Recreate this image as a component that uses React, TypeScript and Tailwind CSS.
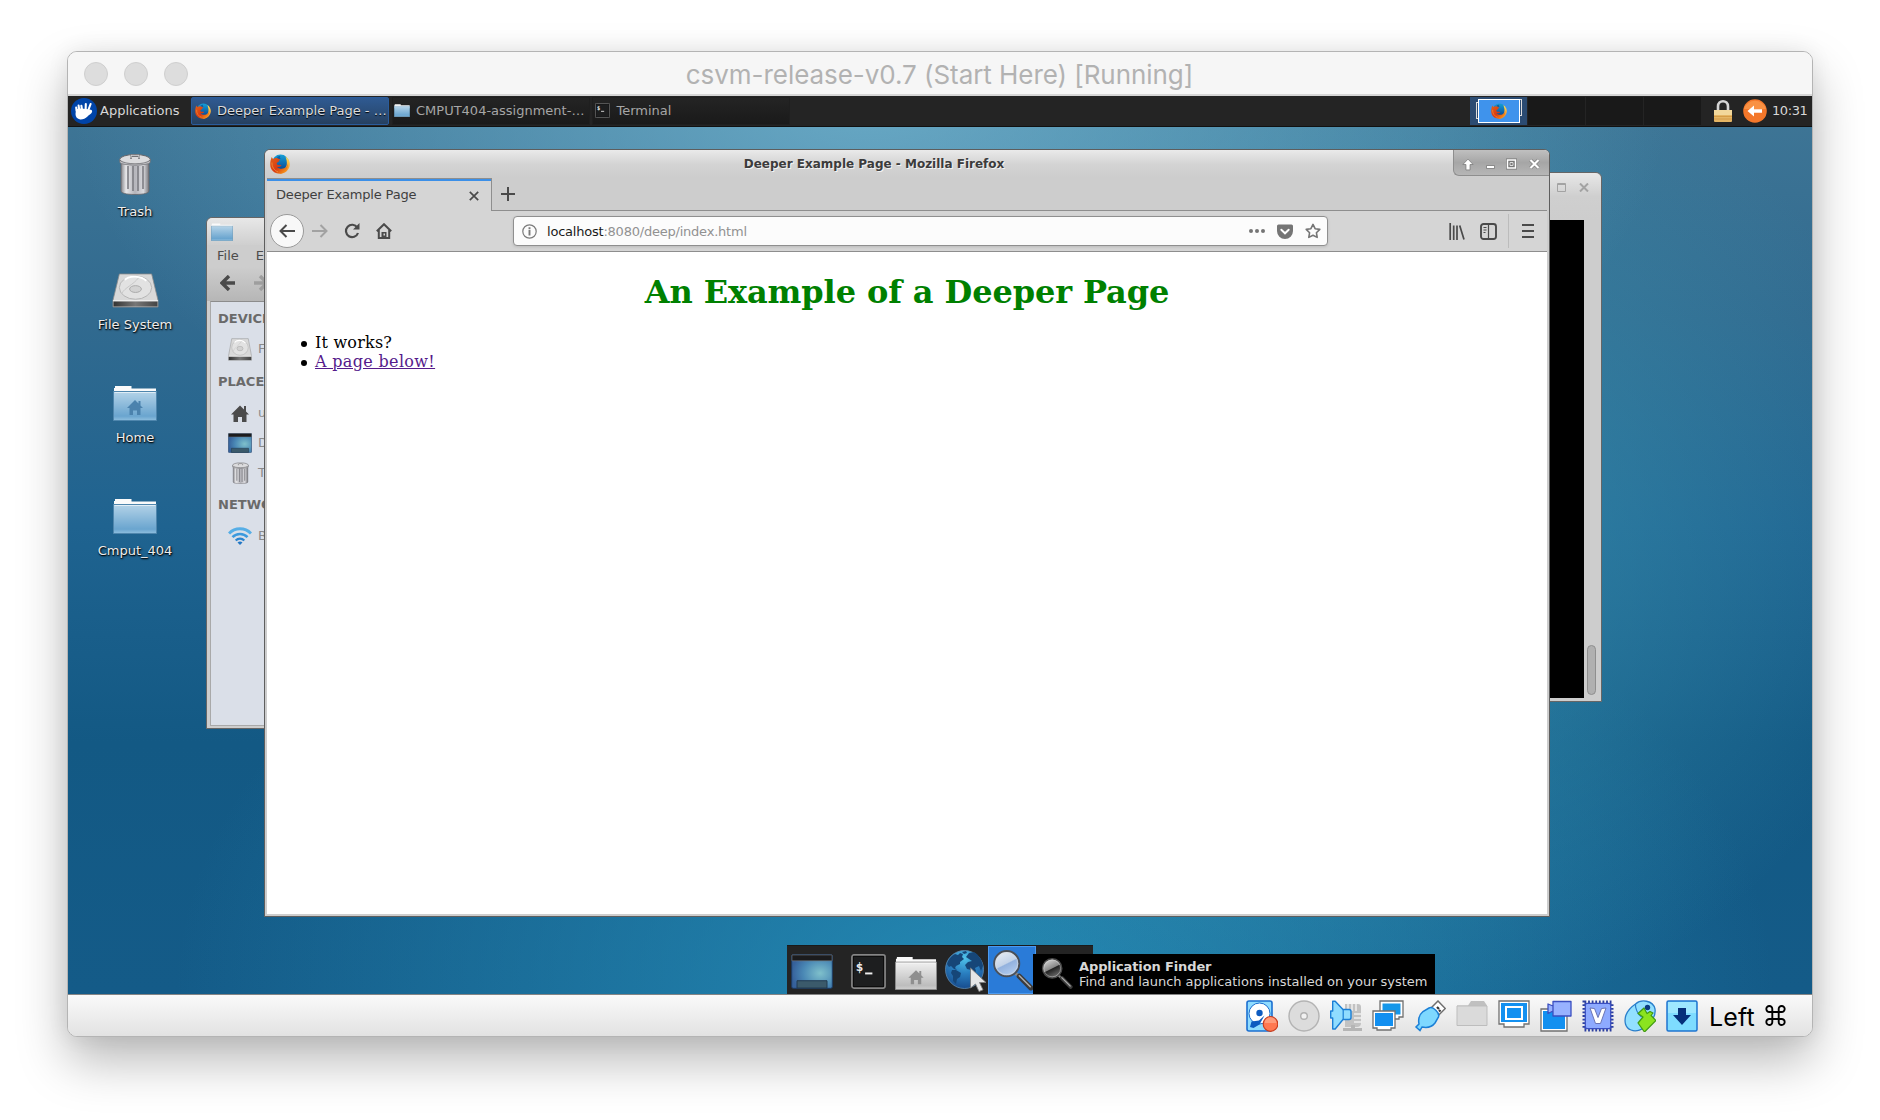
import React from "react";

const sans = "font-['DejaVu_Sans',sans-serif]";

function FirefoxIcon({ size, id }: { size: number; id: string }) {
  return (
    <svg width={size} height={size} viewBox="0 0 20 20" className="block shrink-0">
      <defs>
        <linearGradient id={id + "b"} x1="0" y1="0" x2="0" y2="1">
          <stop offset="0" stopColor="#15a0d8" />
          <stop offset="1" stopColor="#0b3f8c" />
        </linearGradient>
        <linearGradient id={id + "o"} x1="0" y1="0" x2="1" y2="0.9">
          <stop offset="0" stopColor="#e0621a" />
          <stop offset="0.55" stopColor="#d93a12" />
          <stop offset="1" stopColor="#f9a51c" />
        </linearGradient>
        <linearGradient id={id + "y"} x1="0" y1="0" x2="0" y2="1">
          <stop offset="0" stopColor="#ffe25a" />
          <stop offset="1" stopColor="#f2801c" />
        </linearGradient>
      </defs>
      <circle cx="10.500" cy="9" r="8.400" fill={`url(#${id}b)`} />
      <path d="M15.500 2.400c3 1.900 4.500 5 4.300 8.300-.5 5.200-4.700 8.900-9.600 9l-1-3c4 0 7.200-2.600 7.600-6.400.3-2.700-.3-5-1.300-7.900z" fill={`url(#${id}y)`} />
      <path d="M1.800 3c.3 1 .8 1.700 1.500 2.100C4.600 4 6 3.800 7.300 4.300L10 5.100 8.900 7.500 6.700 9c0 1.400.7 2 2 2h2.800c-.8 1.700-2.600 2.300-4.600 1.700 2 2.500 6.600 2.800 9.300.3 1-1 1.500-2.400 1.400-4 1.300 5.700-2.600 10.700-7.800 10.700C4.200 19.700.2 15.600.2 10.400.2 7.500.7 5.200 1.800 3z" fill={`url(#${id}o)`} />
      <path d="M2 8.500c-.3 4 2 8 6 9.300" fill="none" stroke="#f59a3c" strokeWidth="1" opacity=".7" />
      <path d="M7 3.500c.8-1 2.200-1.600 3.500-1.300-.9.400-.8 1.300.2 2.700-1.400.3-2.400 0-3.700-1.400z" fill="#0c4d94" opacity=".7" />
    </svg>
  );
}

function Folder({ w, h, id, home, gray }: { w: number; h: number; id: string; home?: boolean; gray?: boolean }) {
  return (
    <svg width={w} height={h} viewBox="0 0 44 36" preserveAspectRatio="none" className="block shrink-0">
      <defs>
        <linearGradient id={id} x1="0" y1="0" x2="0" y2="1">
          <stop offset="0" stopColor={gray ? "#f0f0f0" : "#b4d3e8"} />
          <stop offset="0.85" stopColor={gray ? "#bdbdbd" : "#6aa5cf"} />
          <stop offset="1" stopColor={gray ? "#cfcfcf" : "#8fbfdf"} />
        </linearGradient>
      </defs>
      <path d="M2 1h16.500v2.500H43V12H1V3h1z" fill="#fafafa" />
      <path d="M.5 6.500h43V35.500H.5z" fill={`url(#${id})`} stroke={gray ? "#8c8c8c" : "#4f86ad"} strokeWidth="1" />
      <path d="M1.500 7.500h41" stroke="#fff" opacity=".6" />
      {home && (
        <path d="M22 15l-8 8h2.500v7H20v-4.500h4V30h3.500v-7H30l-2.500-2.500V16h-2v2.500z" fill={gray ? "#8f8f8f" : "#4b82ad"} />
      )}
    </svg>
  );
}

function TrashIcon({ w, h, id }: { w: number; h: number; id: string }) {
  return (
    <svg width={w} height={h} viewBox="0 0 32 42" className="block shrink-0">
      <defs>
        <linearGradient id={id}>
          <stop offset="0" stopColor="#85858a" />
          <stop offset=".18" stopColor="#e8e8ea" />
          <stop offset=".5" stopColor="#b4b4ba" />
          <stop offset=".8" stopColor="#dadade" />
          <stop offset="1" stopColor="#77777c" />
        </linearGradient>
      </defs>
      <path d="M2 8h28v30c0 2-5 3.500-14 3.500S2 40 2 38z" fill={`url(#${id})`} stroke="#66666a" strokeWidth=".8" />
      <path d="M9 13v23M14 13v25M19 13v25M24 13v23" stroke="#77777d" strokeWidth="2" opacity=".75" />
      <ellipse cx="16" cy="6.500" rx="15.300" ry="5" fill="#dcdcde" stroke="#66666a" />
      <path d="M.8 7v2.500C3 13 29 13 31.200 9.500V7C27 12 5 12 .8 7z" fill="#c4c4c8" stroke="#6c6c70" strokeWidth=".7" />
      <path d="M12 6V3h8v3" fill="none" stroke="#727276" strokeWidth="1.800" />
      <path d="M12 5.300V2.300h8v3" fill="none" stroke="#eee" strokeWidth=".8" />
    </svg>
  );
}

function DriveIcon({ w, h, id }: { w: number; h: number; id: string }) {
  return (
    <svg width={w} height={h} viewBox="0 0 48 36" preserveAspectRatio="none" className="block shrink-0">
      <defs>
        <linearGradient id={id}>
          <stop offset="0" stopColor="#333" />
          <stop offset=".5" stopColor="#777" />
          <stop offset="1" stopColor="#444" />
        </linearGradient>
      </defs>
      <path d="M7.500 1h33L47 28v7H1v-7z" fill="#d9d9d9" stroke="#8a8a8a" strokeWidth=".8" />
      <path d="M1.500 29h45v5.500h-45z" fill={`url(#${id})`} />
      <path d="M1 28.500h46" stroke="#f5f5f5" strokeWidth="1.200" />
      <ellipse cx="24" cy="15" rx="16.500" ry="12" fill="#e2e2e2" stroke="#b5b5b5" />
      <path d="M13 7c5-5 17-4 22 1" stroke="#fff" strokeWidth="2" fill="none" />
      <path d="M10 21c3-6 12-9 17-16" stroke="#c6c6c6" fill="none" />
      <ellipse cx="24" cy="16.500" rx="6" ry="3.500" fill="#d2d2d2" stroke="#aaa" />
    </svg>
  );
}

function MonitorThumb({ w, h, id }: { w: number; h: number; id: string }) {
  return (
    <svg width={w} height={h} viewBox="0 0 42 36" preserveAspectRatio="none" className="block shrink-0">
      <defs>
        <radialGradient id={id} cx=".7" cy=".55" r=".7">
          <stop offset="0" stopColor="#7fc0cb" />
          <stop offset=".6" stopColor="#4a88b5" />
          <stop offset="1" stopColor="#36619b" />
        </radialGradient>
      </defs>
      <rect x=".7" y=".7" width="40.600" height="34.600" rx="1.500" fill={`url(#${id})`} stroke="#1d3d66" />
      <path d="M1 1h40v6H1z" fill="#1b1b1d" stroke="#777" strokeWidth=".6" />
      <path d="M6 35v-7.500h30V35z" fill="#3b5a6b" stroke="#22394f" />
    </svg>
  );
}

function TerminalIcon({ size }: { size: number }) {
  return (
    <svg width={size} height={size} viewBox="0 0 36 36" className="block shrink-0">
      <rect x="1" y="1" width="34" height="34" rx="2" fill="#1d1e1f" stroke="#858585" strokeWidth="1.800" />
      <rect x="2.500" y="2.500" width="31" height="31" fill="none" stroke="#0d0d0d" />
      <text x="5" y="17" fontSize="13" fontWeight="bold" fill="#eee" fontFamily="DejaVu Sans Mono">$</text>
      <path d="M14.500 20h7.500" stroke="#eee" strokeWidth="2" />
    </svg>
  );
}

function Magnifier({ w, h, id, dark }: { w: number; h: number; id: string; dark?: boolean }) {
  return (
    <svg width={w} height={h} viewBox="0 0 40 40" className="block shrink-0">
      <defs>
        <linearGradient id={id} x1="0.200" y1="0" x2=".7" y2="1">
          <stop offset="0" stopColor={dark ? "#ddd" : "#e8eef6"} />
          <stop offset=".5" stopColor={dark ? "#888" : "#c3d3e8"} />
          <stop offset=".54" stopColor={dark ? "#222" : "#93b2de"} />
          <stop offset="1" stopColor={dark ? "#777" : "#b4cef0"} />
        </linearGradient>
      </defs>
      <path d="M22 22l5 4" stroke="#888" strokeWidth="3" />
      <path d="M26 25l11 11" stroke="#3c3c3c" strokeWidth="5" strokeLinecap="round" />
      <path d="M26 24.500l10.500 10.500" stroke="#aaa" strokeWidth="1.500" strokeLinecap="round" />
      <circle cx="14" cy="13" r="12" fill={`url(#${id})`} stroke={dark ? "#4a4a4a" : "#4b5058"} strokeWidth="1.800" />
      <circle cx="14" cy="13" r="10.500" fill="none" stroke="#ddd" strokeWidth=".8" opacity=".7" />
    </svg>
  );
}

function Globe() {
  return (
    <svg width="42" height="44" viewBox="0 0 42 44" className="block shrink-0">
      <defs>
        <radialGradient id="globe" cx=".5" cy=".2" r=".8">
          <stop offset="0" stopColor="#4fc3ea" />
          <stop offset=".5" stopColor="#2a7fc0" />
          <stop offset="1" stopColor="#174c8e" />
        </radialGradient>
      </defs>
      <circle cx="19.500" cy="20.500" r="19" fill="url(#globe)" stroke="#5d8cb4" strokeWidth=".8" />
      <path d="M2 15c1-4 4-8 8-10l3 1 2-2 3 1-1 3 2 2-4 3 0 2-4 2-1 2 2 2-3-1-3-3-2 1zM7 21l4 0 5 3-1 4-3 2-1 5-3-3 0-5-2-3zM21 8l3-4 5-1c5 3 8 8 9 14l-2 5-2-5-4 2 1 3-3 4-2-5-4-1-2-4 3-3 4-1zM17 3l4-1 1 2-3 1z" fill="#164678" />
      <path d="M25.500 19v20l5-4 3.500 7.500 4-1.700-3.500-7.300h6.500z" fill="#e6e6e6" stroke="#7c7c7c" strokeWidth=".9" />
    </svg>
  );
}

function XubuntuLogo() {
  return (
    <svg width="26" height="26" viewBox="0 0 26 26" className="block shrink-0">
      <circle cx="13" cy="13" r="13" fill="#0044a8" />
      <path d="M5 11.500C8 10 12 10.500 15 11l5 .8c1.400.6 1.500 2 .5 3.300-1.200 1.500-2.800 2.300-4 3.300-2 1.800-4.500 3.100-7.200 3-3.100-.2-4.800-2.300-4.800-5.300z" fill="#fff" />
      <path d="M5.600 12.500L5.200 9.600M8.200 12L7.600 7.600M11 12l-.6-4.200M14.600 12l.2-6M17.200 12.500l2.400-6.500" stroke="#fff" strokeLinecap="round" strokeWidth="2.100" />
    </svg>
  );
}

function Task({ icon, label, active }: { icon: React.ReactNode; label: string; active?: boolean }) {
  return (
    <div
      className={
        "flex h-7 w-[198px] shrink-0 items-center overflow-hidden whitespace-nowrap text-[13px] " +
        (active
          ? "rounded-[2px] border border-[#2a5c9c] bg-linear-to-b from-[#2f5a92] via-[#2b4f7c] to-[#26405f] pl-[3px] text-[#dcdcdc] [text-shadow:0_1px_1px_#000]"
          : "border border-[#1f1f1f] bg-linear-to-b from-[#242424] to-[#1a1a1a] pl-[1.500px] text-[#a6a6a6]")
      }
    >
      <span className="flex w-[22px] shrink-0">{icon}</span>
      <span>{label}</span>
    </div>
  );
}

function PanelBar() {
  return (
    <div className="relative z-10 flex h-[31px] items-center border-b border-[#111] bg-[#242424] pb-[1px]">
      <div className="flex w-[123px] items-center pl-[3px] text-[13px] text-[#d8d8d8]">
        <XubuntuLogo />
        <span className="ml-[3px]">Applications</span>
      </div>
      <div className="flex gap-[2.500px]">
        <Task active icon={<FirefoxIcon size={16} id="fxt" />} label="Deeper Example Page - …" />
        <Task icon={<Folder w={16} h={13} id="ftask" />} label="CMPUT404-assignment-…" />
        <Task icon={<TerminalIcon size={15} />} label="Terminal" />
      </div>
      <div className="ml-auto flex h-[28px] gap-[1px]">
        <div className="flex w-[57px] items-center justify-center bg-[#2b4b72]">
          <div className="h-[17px] w-[2px] border-y border-l border-[#ddd]" />
          <div className="flex h-6 w-[42px] items-center justify-center border border-white bg-[#3f93ec]">
            <FirefoxIcon size={16} id="fxp" />
          </div>
          <div className="mb-[7px] h-[17px] w-[2px] border-y border-r border-[#ddd]" />
        </div>
        <div className="w-[57px] bg-[#191919]" />
        <div className="w-[57px] bg-[#191919]" />
        <div className="w-[57px] bg-[#191919]" />
      </div>
      <div className="flex w-[111px] items-center pl-[12px]">
        <svg width="20" height="24" viewBox="0 0 20 24">
          <path d="M5 12V7.500C5 .5 15 .5 15 7.500V12" fill="none" stroke="#d5d5d5" strokeWidth="2.600" />
          <rect x="1" y="11" width="18" height="12" rx="1" fill="#e5b564" />
          <rect x="1" y="11" width="18" height="5" fill="#f2d79a" />
          <path d="M1 17.500h18M1 20h18" stroke="#cf963f" strokeWidth=".8" />
        </svg>
        <svg width="24" height="24" viewBox="0 0 24 24" className="ml-[10px]">
          <circle cx="12" cy="12" r="11.800" fill="#f4772a" />
          <path d="M1 10a11.500 11.500 0 0 1 22 0z" fill="#fb9c4e" opacity=".7" />
          <path d="M4.500 12l6.500-5.500v3.700h8v3.600h-8v3.700z" fill="#fff" />
        </svg>
        <span className="ml-[5px] text-[13px] tracking-[-0.400px] text-[#d8d8d8]">10:31</span>
      </div>
    </div>
  );
}

function DesktopIcon({ icon, label }: { icon: React.ReactNode; label: string }) {
  return (
    <div className="flex h-[113px] flex-col items-center">
      <div className="flex h-[44px] items-end">{icon}</div>
      <div className="mt-[7px] whitespace-nowrap text-[13px] leading-[20px] text-[#eee] [text-shadow:1px_1px_2px_#000,0_1px_1px_rgba(0,0,0,0.8)]">
        {label}
      </div>
    </div>
  );
}

function SideHeading({ children }: { children: React.ReactNode }) {
  return <div className="h-[20px] pl-[7px] text-[13px] font-bold leading-[22px] text-[#6a6a6a]">{children}</div>;
}

function SideRow({ icon, label }: { icon: React.ReactNode; label: string }) {
  return (
    <div className="flex h-[30px] items-center whitespace-nowrap pl-[17px] text-[13px] text-[#8a8a8a]">
      <span className="flex w-[24px] shrink-0 justify-center">{icon}</span>
      <span className="ml-[6px]">{label}</span>
    </div>
  );
}

function FileManager() {
  return (
    <div className="absolute left-[138px] top-[121px] flex h-[512px] w-[64px] flex-col overflow-hidden rounded-tl-[6px] border border-[#666] bg-[#cdcdcd] pb-[2px] pl-[3px]">
      <div className="-ml-[3px] flex h-[27px] items-center rounded-tl-[5px] bg-linear-to-b from-[#e8e8e8] to-[#cfcfcf] pl-[4px]">
        <Folder w={22} h={18} id="fwin" />
      </div>
      <div className="flex h-[22px] items-center pl-[7px] text-[13px] text-[#4c4c4c]">
        <span>File</span>
        <span className="ml-[17px]">E</span>
      </div>
      <div className="-ml-[3px] flex h-[34px] items-center gap-[17px] bg-linear-to-b from-[#cdcdcd] to-[#b6b6b6] pb-[2px] pl-[13px]">
        <svg width="16" height="16" viewBox="0 0 16 16" className="shrink-0">
          <path d="M9 1L2 8l7 7M2 8h13" fill="none" stroke="#4a4a4a" strokeWidth="3.400" />
        </svg>
        <svg width="16" height="16" viewBox="0 0 16 16" className="shrink-0">
          <path d="M7 1l7 7-7 7M14 8H1" fill="none" stroke="#9e9e9e" strokeWidth="3.400" />
        </svg>
      </div>
      <div className="flex flex-1 flex-col overflow-hidden border border-t-[#8c8c8c] border-l-[#a9a9a9] border-b-[#a9a9a9] border-r-0 bg-[#dadfe8] pt-[6px]">
        <SideHeading>DEVICES</SideHeading>
        <div className="h-[6px]" />
        <SideRow icon={<DriveIcon w={24} h={23} id="ds" />} label="F" />
        <div className="h-[7px]" />
        <SideHeading>PLACES</SideHeading>
        <div className="h-[7px]" />
        <SideRow
          icon={
            <svg width="18" height="17" viewBox="0 0 18 17">
              <path d="M9 .5L0 9.500h2.500V17H7v-5h4v5h4.500V9.500H18l-3-3V1h-2v3.500z" fill="#4b4b4b" />
            </svg>
          }
          label="u"
        />
        <SideRow icon={<MonitorThumb w={24} h={20} id="ms" />} label="D" />
        <SideRow icon={<TrashIcon w={17} h={22} id="ts" />} label="T" />
        <div className="h-[6px]" />
        <SideHeading>NETWORK</SideHeading>
        <div className="h-[7px]" />
        <SideRow
          icon={
            <svg width="24" height="18" viewBox="0 0 24 18">
              <path d="M1 6.500C7 .2 17 .2 23 6.500" fill="none" stroke="#56aee6" strokeWidth="3" />
              <path d="M4.500 10.200c4-4.200 11-4.200 15 0" fill="none" stroke="#3c99dd" strokeWidth="2.600" />
              <path d="M7.700 13.500c2.400-2.500 6.200-2.500 8.600 0" fill="none" stroke="#2b84cf" strokeWidth="2.200" />
              <path d="M9.500 15.500c1.500-1.500 3.500-1.500 5 0L12 18z" fill="#2277c4" />
            </svg>
          }
          label="B"
        />
      </div>
    </div>
  );
}

function TerminalWindow() {
  return (
    <div className="absolute left-[1132px] top-[76px] flex h-[530px] w-[402px] flex-col rounded-t-[6px] border border-[#666] bg-[#cdcdcd] pb-[3px]">
      <div className="flex h-[47px] justify-end gap-[13px] rounded-t-[6px] bg-linear-to-b from-[#e8e8e8] via-[#cfcfcf] to-[#cdcdcd] pr-[12px] pt-[10px]">
        <svg width="9" height="9" viewBox="0 0 9 9"><path d="M.5.500h8v8h-8zM0 1.500h9" fill="none" stroke="#a3a3a3" /></svg>
        <svg width="10" height="9" viewBox="0 0 10 9"><path d="M1 .5l8 8M9 .5l-8 8" stroke="#a3a3a3" strokeWidth="2" /></svg>
      </div>
      <div className="flex flex-1">
        <div className="w-[383px] bg-black" />
        <div className="flex flex-1 items-end pb-[3px] pl-[3px]">
          <div className="h-[50px] w-[9px] rounded-full border border-[#8f8f8f] bg-[#b0b0b0]" />
        </div>
      </div>
    </div>
  );
}

function NavBar() {
  return (
    <div className="flex h-[41px] items-center border-b border-[#8e8e8e] bg-[#d5d5d5]">
      <div className="ml-[3px] flex h-[34px] w-[34px] items-center justify-center rounded-full border border-[#9a9a9a] bg-[#f8f8f8]">
        <svg width="16" height="14" viewBox="0 0 16 14"><path d="M7.500 1L1.500 7l6 6M1.500 7H16" fill="none" stroke="#4a4a4a" strokeWidth="2" /></svg>
      </div>
      <svg width="16" height="14" viewBox="0 0 16 14" className="ml-[8px]"><path d="M8.500 1l6 6-6 6M14.500 7H0" fill="none" stroke="#a2a2a2" strokeWidth="2" /></svg>
      <svg width="16" height="16" viewBox="0 0 16 16" className="ml-[16px]">
        <path d="M13.300 4.500A6.200 6.200 0 1 0 14 10" fill="none" stroke="#4a4a4a" strokeWidth="2.200" />
        <path d="M15.500 0v6.500H9z" fill="#4a4a4a" />
      </svg>
      <svg width="16" height="16" viewBox="0 0 16 16" className="ml-[16px]">
        <path d="M.8 8.300L8 1.200l7.200 7.100M2.800 7v8h10.400V7" fill="none" stroke="#4a4a4a" strokeWidth="2" />
        <path d="M5.500 15V9h5v6z" fill="#4a4a4a" />
        <path d="M7.500 10.500h1.500v2H7.500z" fill="#d5d5d5" />
      </svg>
      <div className="ml-[121px] flex h-[30px] w-[815px] items-center rounded-[4px] border border-[#8f8f8f] bg-[#fcfcfc] pl-[8px] pr-[6px] shadow-[0_1px_3px_rgba(0,0,0,0.12)]">
        <svg width="15" height="15" viewBox="0 0 15 15">
          <circle cx="7.500" cy="7.500" r="6.700" fill="none" stroke="#7a7a7a" strokeWidth="1.200" />
          <path d="M7.500 6v5.500M7.500 3.300v1.900" stroke="#7a7a7a" strokeWidth="1.900" />
        </svg>
        <span className="ml-[10px] pt-[1px] text-[13px] tracking-[-0.220px] text-[#919191]">
          <span className="text-[#1a1a1a]">localhost</span>:8080/deep/index.html
        </span>
        <svg width="16" height="4" viewBox="0 0 16 4" className="ml-auto"><circle cx="2" cy="2" r="2" fill="#757575" /><circle cx="8" cy="2" r="2" fill="#757575" /><circle cx="14" cy="2" r="2" fill="#757575" /></svg>
        <svg width="16" height="15" viewBox="0 0 16 15" className="ml-[12px]">
          <path d="M1.500.5h13a1.500 1.500 0 0 1 1.500 1.500v5a8 8 0 0 1-16 0V2A1.500 1.500 0 0 1 1.500.5z" fill="#757575" />
          <path d="M4.300 5.700L8 9.300l3.700-3.600" fill="none" stroke="#fff" strokeWidth="1.900" strokeLinecap="round" />
        </svg>
        <svg width="16" height="16" viewBox="0 0 16 16" className="ml-[12px]">
          <path d="M8 1.400l2.100 4.300 4.700.7-3.400 3.300.8 4.700L8 12.200l-4.200 2.200.8-4.700L1.200 6.400l4.700-.7z" fill="none" stroke="#757575" strokeWidth="1.600" strokeLinejoin="round" />
        </svg>
      </div>
      <svg width="16" height="17" viewBox="0 0 16 17" className="ml-[121px]">
        <path d="M1.200 0v17M4.700 2.500V17M8 2.500V17M10.700 2.500L15 16.500" stroke="#4a4a4a" strokeWidth="1.700" />
      </svg>
      <svg width="17" height="17" viewBox="0 0 17 17" className="ml-[15px]">
        <rect x="1" y="1" width="15" height="15" rx="2.500" fill="none" stroke="#4a4a4a" strokeWidth="1.900" />
        <path d="M8.500 1v15M3.500 4.500h3M3.500 7h3M3.500 9.500h2" stroke="#4a4a4a" strokeWidth="1.200" />
      </svg>
      <div className="ml-[11px] h-[34px] w-px bg-[#bcbcbc]" />
      <svg width="12" height="14" viewBox="0 0 12 14" className="ml-[13px]"><path d="M0 1h12M0 7h12M0 13h12" stroke="#4a4a4a" strokeWidth="2" /></svg>
    </div>
  );
}

function Browser() {
  return (
    <div className="absolute left-[196px] top-[53px] flex h-[768px] w-[1286px] flex-col rounded-t-[6px] border border-[#5e5e5e] bg-[#cdcdcd] px-[2px] pb-[2px]">
      <div className="-mx-[2px] flex h-[28px] items-start rounded-t-[5px] bg-linear-to-b from-[#eaeaea] via-[#d4d4d4] to-[#cdcdcd]">
        <div className="w-[97px] pl-[5px] pt-[4px]"><FirefoxIcon size={20} id="fxw" /></div>
        <div className="flex-1 pr-[67px] pt-[5px] text-center text-[12px] font-bold leading-[19px] text-[#3c3c3c] [text-shadow:1px_1px_0_#f4f4f4]">
          Deeper Example Page - Mozilla Firefox
        </div>
        <div className="flex h-[26px] w-[96px] items-center justify-between rounded-bl-[6px] rounded-tr-[5px] border-b border-l border-[#8e8e8e] bg-linear-to-b from-[#c0c0c0] via-[#a6a6a6] to-[#b6b6b6] pl-[8px] pr-[9px] pt-[3px]">
          <svg width="12" height="13" viewBox="0 0 11 12"><path d="M5.500 1L.8 6h2.800v5h3.800V6h2.800z" fill="#fff" stroke="#777" strokeWidth=".7" /></svg>
          <svg width="9" height="12" viewBox="0 0 9 12"><path d="M.5 7.500h8v3h-8z" fill="#fff" stroke="#777" strokeWidth=".8" /></svg>
          <svg width="11" height="12" viewBox="0 0 11 12"><path d="M1.500 2h8v8h-8z" fill="none" stroke="#777" strokeWidth="3" /><path d="M1.500 2h8v8h-8z" fill="#777" stroke="#fff" strokeWidth="1.500" /><path d="M4 4.500h3v3H4z" fill="#777" stroke="#ddd" strokeWidth="1" /></svg>
          <svg width="11" height="12" viewBox="0 0 11 12"><path d="M1.500 2l8 8M9.500 2l-8 8" stroke="#777" strokeWidth="3.400" /><path d="M1.500 2l8 8M9.500 2l-8 8" stroke="#fff" strokeWidth="2.200" /></svg>
        </div>
      </div>
      <div className="flex h-[33px] items-stretch bg-[#cdcdcd]">
        <div className="flex w-[225px] items-center border-r border-t border-[#8e8e8e] bg-[#d5d5d5] shadow-[inset_0_2px_0_#3b8fe8]">
          <span className="flex-1 whitespace-nowrap pb-[1px] pl-[9px] text-[13px] tracking-[-0.180px] text-[#3f3f3f]">Deeper Example Page</span>
          <svg width="10" height="10" viewBox="0 0 10 10" className="mr-[12px] mt-[2px]"><path d="M.8.800l8.400 8.400M9.200.800L.8 9.200" stroke="#4a4a4a" strokeWidth="1.700" /></svg>
        </div>
        <div className="flex flex-1 items-center border-b border-[#8e8e8e] pl-[9px]">
          <svg width="14" height="14" viewBox="0 0 14 14"><path d="M7 0v14M0 7h14" stroke="#4a4a4a" strokeWidth="2" /></svg>
        </div>
      </div>
      <NavBar />
      <div className="flex-1 bg-white font-['DejaVu_Serif',serif] text-black">
        <h1 className="mt-[21px] whitespace-nowrap text-center text-[32px] font-bold leading-[38px] tracking-[-0.110px] text-[#008000]">An Example of a Deeper Page</h1>
        <ul className="mt-[22px] pl-[34px] text-[16px] leading-[19px]">
          <li className="flex items-center gap-[8px]"><span className="mt-[2px] h-[6px] w-[6px] rounded-full bg-black" /><span className="tracking-[0.200px]">It works?</span></li>
          <li className="flex items-center gap-[8px]"><span className="mt-[2px] h-[6px] w-[6px] rounded-full bg-black" /><a className="tracking-[0.330px] text-[#551a8b] underline">A page below!</a></li>
        </ul>
      </div>
    </div>
  );
}

function Dock() {
  return (
    <div className="absolute bottom-0 left-[719px] flex h-[49px] w-[306px] items-center border-t border-[#1a1a1a] bg-[#242424]">
      <div className="ml-[4px] mt-[3px]"><MonitorThumb w={42} h={35} id="md" /></div>
      <div className="ml-[18px] mt-[2px]"><TerminalIcon size={35} /></div>
      <div className="ml-[9px] mt-[5px]"><Folder w={42} h={34} id="fd" gray home /></div>
      <div className="ml-[8px] mt-[2px]"><Globe /></div>
      <div className="ml-[1px] flex h-[48px] w-[48px] items-center justify-center border border-[#4b9af0] bg-[#2a7bd8] pl-[2px] pt-[2px]">
        <Magnifier w={42} h={42} id="mag1" />
      </div>
    </div>
  );
}

function AppTooltip() {
  return (
    <div className="absolute bottom-0 left-[965px] flex h-[40px] w-[402px] items-center whitespace-nowrap bg-black pl-[8px] text-[13px] leading-[15px] text-[#d8d8d8]">
      <Magnifier w={32} h={32} id="mag2" dark />
      <div className="ml-[6px]">
        <div className="font-bold tracking-[-0.120px]">Application Finder</div>
        <div className="tracking-[-0.020px]">Find and launch applications installed on your system</div>
      </div>
    </div>
  );
}

function StatusBar() {
  return (
    <div className="flex h-[42px] items-center justify-end rounded-b-[9px] border-t border-[#858585] bg-linear-to-b from-[#fafafa] to-[#e2e2e2] pr-[26px]">
      <div className="flex gap-[10px]">
        <svg width="32" height="32" viewBox="0 0 32 32">
          <rect x="1" y="1" width="25" height="30" rx="2" fill="#8fdcff" stroke="#1b6fd0" strokeWidth="1.600" />
          <circle cx="13.500" cy="13.500" r="10.500" fill="#fff" stroke="#1b6fd0" />
          <circle cx="13.500" cy="13" r="3.200" fill="#0d5bc0" />
          <path d="M4 27l1.500-5.500 7.500-1 5.500-5-5 9-6 3.500z" fill="#0d5bc0" />
          <circle cx="24.500" cy="24" r="7.300" fill="#ff7850" stroke="#c93c1c" strokeWidth="1.200" />
          <path d="M18.500 23a6 6 0 0 1 12 0z" fill="#ffab8c" opacity=".7" />
        </svg>
        <svg width="32" height="32" viewBox="0 0 32 32">
          <circle cx="16" cy="16" r="15" fill="#dcdcdc" stroke="#b3b3b3" strokeWidth="1.400" />
          <circle cx="16" cy="16" r="3.300" fill="#f1f1f1" stroke="#b0b0b0" strokeWidth="1.400" />
        </svg>
        <svg width="32" height="32" viewBox="0 0 32 32">
          <path d="M15 4h13q3 0 3 3v16q0 4-4 4H15z" fill="#c2c2c2" />
          <path d="M18 4v7M22 4v7M26 4v7M24 14h8M24 18h8M24 22h8" stroke="#efefef" strokeWidth="1.500" />
          <path d="M13 28h19v3H13zM21 25h4v4h-4z" fill="#b5b5b5" />
          <path d="M.7 11h2v-9.800h2.500L13 9.500h6q2 0 2 2v6q0 2-2 2h-6L5.200 29H2.700V18h-2z" fill="#8fdcff" stroke="#1b7fd6" strokeWidth="1.400" strokeLinejoin="round" />
          <path d="M13.200 9.500v10" stroke="#1b7fd6" strokeWidth="1.200" />
        </svg>
        <svg width="32" height="32" viewBox="0 0 32 32">
          <path d="M8 1h23v16h-4v2h-8v-2H8z" fill="#fff" stroke="#707070" strokeWidth="1.300" />
          <path d="M10.500 3.500h18v11h-18z" fill="#1597ea" />
          <path d="M1 11h22v17h-4v2H5v-2H1z" fill="#fff" stroke="#707070" strokeWidth="1.300" />
          <path d="M3 13h18v13H3z" fill="#128ff0" />
        </svg>
        <svg width="32" height="32" viewBox="0 0 32 32">
          <path d="M24 1l7.300 7.500-7 7-7.300-7.500z" fill="#fff" stroke="#6e6e6e" strokeWidth="1.500" />
          <path d="M23 7l2 2M26.500 10l-1.500 1.500" stroke="#333" strokeWidth="2.200" />
          <path d="M15 8c4-2 11 5 9.500 9L21 23c-3 4-8 5-13 4l-2 3.500-4-3.500 3-3C4 19 6 14 9 11.500z" fill="#7ed8ff" stroke="#1b7fd6" strokeWidth="1.500" />
        </svg>
        <svg width="32" height="32" viewBox="0 0 32 32">
          <path d="M12 5.500L15 1h13l3 4.500V26H1V5.500z" fill="#c0c0c0" />
          <path d="M1 6h30v19.500H1z" fill="#dadada" stroke="#bdbdbd" />
        </svg>
        <svg width="32" height="32" viewBox="0 0 32 32">
          <path d="M1 1h30v23h-5v3H6v-3H1z" fill="#fff" stroke="#707070" strokeWidth="1.300" />
          <path d="M3 3h26v19H3z" fill="#1390f0" />
          <path d="M8 7h16v12H8z" fill="none" stroke="#fff" strokeWidth="2" />
        </svg>
        <svg width="32" height="32" viewBox="0 0 32 32">
          <path d="M1 9h26v22H1z" fill="#fff" stroke="#707070" strokeWidth="1.300" />
          <path d="M3 11h22v18H3z" fill="#1390f0" />
          <path d="M13 1.500h18v14.500H13zM13 11l-5 2.500V4l5 2z" fill="#98b2ff" stroke="#3b4fc0" strokeWidth="1.300" strokeLinejoin="round" />
        </svg>
        <svg width="32" height="32" viewBox="0 0 32 32">
          <rect x="2.500" y="2.500" width="27" height="27" fill="none" stroke="#2c3f9f" strokeWidth="4" strokeDasharray="1.800 1.800" />
          <rect x="3.300" y="3.300" width="25.400" height="25.400" rx="2" fill="#8eaaff" stroke="#3b4fc0" strokeWidth="1.300" />
          <path d="M8 8l4.500.500 3.500 9 3.500-9L24 8l-5.500 15.500h-5z" fill="#fff" stroke="#6a74b4" strokeWidth="1" strokeLinejoin="round" />
        </svg>
        <svg width="32" height="32" viewBox="0 0 32 32">
          <path d="M11.500 4C17-1 29 0 31 9c1 7-3 12-8 16-4 5-11 7-16 5-6-2-7-9-5-15 2-5 5-8 9.500-11z" fill="#92e0ff" stroke="#2a7fcb" strokeWidth="1.300" />
          <path d="M11.500 4c-.5 4 2 10 6 13" fill="none" stroke="#2a7fcb" strokeWidth="1.200" />
          <circle cx="23.500" cy="7.500" r="2.700" fill="#0b3b82" />
          <path d="M20 8l-6 5.500 5 3.500-5 6 6.500 9L32 20.500l-5-5 2-2.500-3-1.500-3 2z" fill="#8be31f" stroke="#3f9a12" strokeWidth="1.200" strokeLinejoin="round" />
        </svg>
        <svg width="32" height="32" viewBox="0 0 32 32">
          <rect x="1" y="1" width="30" height="30" rx="1.500" fill="#7edcff" stroke="#1f74cf" strokeWidth="1.500" />
          <rect x="2" y="2" width="28" height="11" fill="#b4efff" opacity=".6" />
          <path d="M12 8h8v7h5l-9 10-9-10h5z" fill="#062f7a" />
        </svg>
      </div>
      <div className="ml-[11px] flex items-center whitespace-nowrap text-black">
        <span className="pt-[2px] font-[Inter,sans-serif] text-[25px] leading-[30px] tracking-[0.200px]">Left</span>
        <svg width="21" height="21" viewBox="0 0 21 21" className="ml-[10px]">
          <path d="M7 7H4.500a3 3 0 1 1 2.800-2.800V16.800A3 3 0 1 1 4.500 14H16.500a3 3 0 1 1-2.800 2.800V4.200A3 3 0 1 1 16.500 7z" fill="none" stroke="#000" strokeWidth="1.900" />
        </svg>
      </div>
    </div>
  );
}

export default function App() {
  return (
    <div className={"h-[1120px] w-[1880px] overflow-hidden bg-white pl-[67px] pt-[51px] " + sans}>
      <div className="flex h-[986px] w-[1746px] flex-col rounded-[10px] border border-[#b4b4b4] bg-[#f6f6f6] shadow-[0_24px_50px_rgba(0,0,0,0.28),0_0_22px_rgba(0,0,0,0.07)]">
        <div className="flex h-[44px] items-center rounded-t-[9px] border-b-2 border-[#d6d6d6] bg-[#f6f6f6]">
          <div className="flex w-[200px] gap-4 pl-4 pt-[2px]">
            <div className="h-6 w-6 rounded-full border border-[#cfcfcf] bg-[#dddddd]" />
            <div className="h-6 w-6 rounded-full border border-[#cfcfcf] bg-[#dddddd]" />
            <div className="h-6 w-6 rounded-full border border-[#cfcfcf] bg-[#dddddd]" />
          </div>
          <div className="flex-1 pr-[201px] pt-[3px] text-center font-[Inter,sans-serif] text-[26px] leading-[30px] tracking-[-0.050px] text-[#b2b2b2]">
            csvm-release-v0.7 (Start Here) [Running]
          </div>
        </div>
        <div className="relative h-[898px] overflow-hidden bg-[radial-gradient(ellipse_800px_440px_at_46%_0%,rgba(118,186,213,0.75),rgba(118,186,213,0)),radial-gradient(ellipse_600px_520px_at_72%_48%,rgba(60,152,180,0.75),rgba(60,152,180,0)),radial-gradient(ellipse_800px_520px_at_52%_100%,rgba(40,148,190,0.8),rgba(40,148,190,0)),linear-gradient(180deg,#3f7696_0%,#316a8f_25%,#1f6390_48%,#135984_72%,#145b88_100%)]">
          <PanelBar />
          <div className="absolute left-[7px] top-[55px] w-[120px]">
            <DesktopIcon icon={<TrashIcon w={32} h={42} id="td" />} label="Trash" />
            <DesktopIcon icon={<DriveIcon w={47} h={35} id="dd" />} label="File System" />
            <DesktopIcon icon={<Folder w={44} h={36} id="fh" home />} label="Home" />
            <DesktopIcon icon={<Folder w={44} h={36} id="fc" />} label="Cmput_404" />
          </div>
          <FileManager />
          <TerminalWindow />
          <Browser />
          <Dock />
          <AppTooltip />
        </div>
        <StatusBar />
      </div>
    </div>
  );
}
